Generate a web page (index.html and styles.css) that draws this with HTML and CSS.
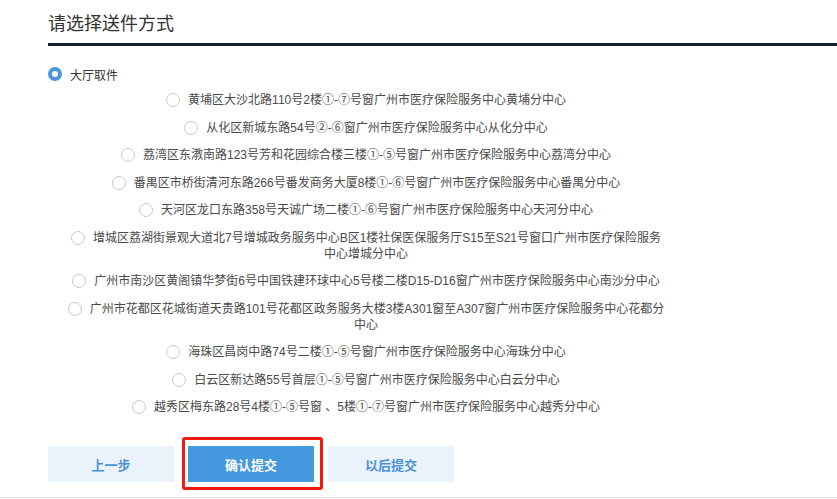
FILE: index.html
```html
<!DOCTYPE html>
<html>
<head>
  <meta http-equiv="content-type" content="text/html; charset=utf-8" />
  <title>请选择送件方式</title>
  <link rel="stylesheet" href="styles.css">
</head>
<body>
  <div class="page">
    <div class="title">请选择送件方式</div>

    <div class="mode">
      <span class="radio checked"></span>
      <span class="mode-label">大厅取件</span>
    </div>

    <div class="options">
      <div class="opt"><span class="radio"></span>黄埔区大沙北路110号2楼①-⑦号窗广州市医疗保险服务中心黄埔分中心</div>
      <div class="opt"><span class="radio"></span>从化区新城东路54号②-⑥窗广州市医疗保险服务中心从化分中心</div>
      <div class="opt"><span class="radio"></span>荔湾区东漖南路123号芳和花园综合楼三楼①-⑤号窗广州市医疗保险服务中心荔湾分中心</div>
      <div class="opt"><span class="radio"></span>番禺区市桥街清河东路266号番发商务大厦8楼①-⑥号窗广州市医疗保险服务中心番禺分中心</div>
      <div class="opt"><span class="radio"></span>天河区龙口东路358号天诚广场二楼①-⑥号窗广州市医疗保险服务中心天河分中心</div>
      <div class="opt"><span class="radio"></span>增城区荔湖街景观大道北7号增城政务服务中心B区1楼社保医保服务厅S15至S21号窗口广州市医疗保险服务中心增城分中心</div>
      <div class="opt"><span class="radio"></span>广州市南沙区黄阁镇华梦街6号中国铁建环球中心5号楼二楼D15-D16窗广州市医疗保险服务中心南沙分中心</div>
      <div class="opt"><span class="radio"></span>广州市花都区花城街道天贵路101号花都区政务服务大楼3楼A301窗至A307窗广州市医疗保险服务中心花都分中心</div>
      <div class="opt"><span class="radio"></span>海珠区昌岗中路74号二楼①-⑤号窗广州市医疗保险服务中心海珠分中心</div>
      <div class="opt"><span class="radio"></span>白云区新达路55号首层①-⑤号窗广州市医疗保险服务中心白云分中心</div>
      <div class="opt"><span class="radio"></span>越秀区梅东路28号4楼①-⑤号窗 、5楼①-⑦号窗广州市医疗保险服务中心越秀分中心</div>
    </div>

    <div class="actions">
      <button class="btn btn-light">上一步</button>
      <div class="btn-wrap">
        <button class="btn btn-primary">确认提交</button>
        <span class="mark"></span>
      </div>
      <button class="btn btn-light">以后提交</button>
    </div>
  </div>
</body>
</html>
```

FILE: styles.css
```css
body {
  margin: 0;
  background: #f2f2f2;
  font-family: "Liberation Sans", "Noto Sans CJK SC", sans-serif;
}
.page {
  background: #fff;
  padding: 0 0 15px 48px;
  border-bottom: 1px solid #e2e2e2;
}
.title {
  font-size: 18px;
  line-height: 24px;
  color: #333;
  padding-top: 12px;
  height: 31px;
  border-bottom: 3px solid #131d2b;
}
.mode {
  display: flex;
  align-items: center;
  margin-top: 20px;
  height: 16px;
  font-size: 12px;
  color: #333;
}
.radio {
  box-sizing: border-box;
  display: inline-block;
  width: 14px;
  height: 14px;
  border: 1px solid #c9c9c9;
  border-radius: 50%;
  background: #fff;
  margin-right: 8px;
}
.radio.checked {
  border: 4px solid #4a95dc;
}
.opt .radio {
  vertical-align: -3px;
}
.options {
  width: 600px;
  margin: 10px 0 0 18px;
  font-size: 12px;
  line-height: 16px;
  color: #4a4a4a;
}
.opt {
  text-align: center;
  margin-bottom: 11.5px;
}
.actions {
  display: flex;
  gap: 14px;
  margin-top: 31px;
}
.btn-wrap {
  position: relative;
}
.btn {
  width: 126px;
  height: 36px;
  border: 0;
  font-family: "Liberation Sans", "Noto Sans CJK SC", sans-serif;
  font-size: 13px;
  font-weight: bold;
  display: block;
}
.btn-light {
  background: #eaf2fb;
  color: #4a90d9;
}
.btn-primary {
  background: #4398de;
  color: #fff;
}
.mark {
  position: absolute;
  left: -6px;
  top: -9px;
  width: 141px;
  height: 53px;
  box-sizing: border-box;
  border: 3px solid #f01a10;
  border-radius: 3px;
}
```
